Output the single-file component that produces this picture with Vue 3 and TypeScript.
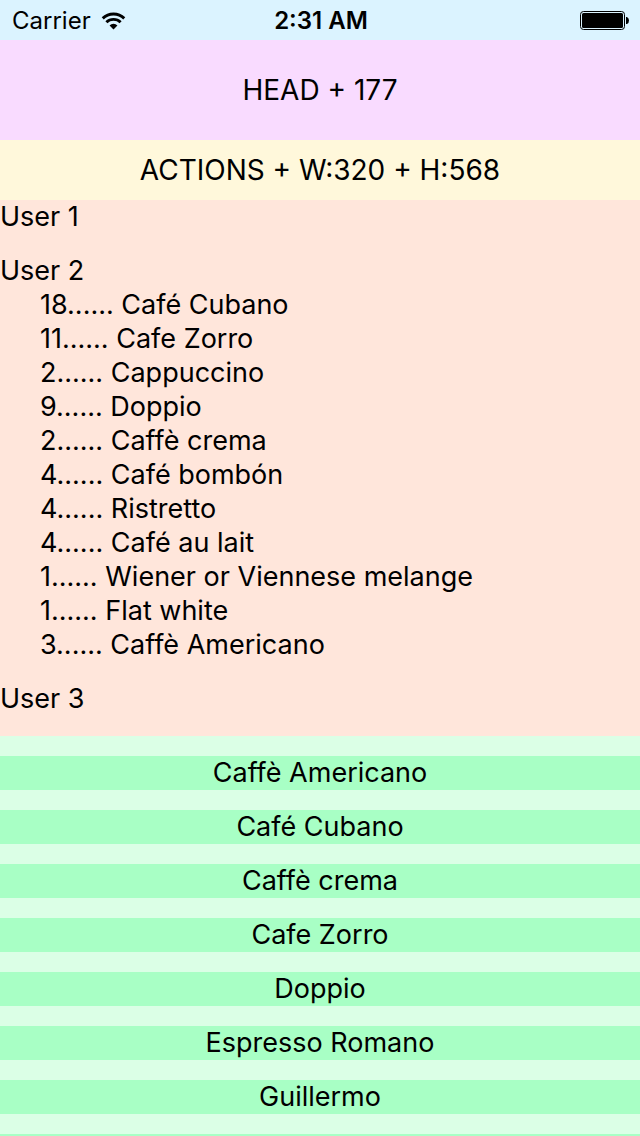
<script setup lang="ts">
import { ref } from 'vue'

interface Order {
  count: number
  drink: string
}

interface User {
  id: number
  name: string
  orders: Order[]
}

const total = ref(177)
const selectedUser = ref(2)

const users = ref<User[]>([
  { id: 1, name: 'User 1', orders: [] },
  {
    id: 2,
    name: 'User 2',
    orders: [
      { count: 18, drink: 'Café Cubano' },
      { count: 11, drink: 'Cafe Zorro' },
      { count: 2, drink: 'Cappuccino' },
      { count: 9, drink: 'Doppio' },
      { count: 2, drink: 'Caffè crema' },
      { count: 4, drink: 'Café bombón' },
      { count: 4, drink: 'Ristretto' },
      { count: 4, drink: 'Café au lait' },
      { count: 1, drink: 'Wiener or Viennese melange' },
      { count: 1, drink: 'Flat white' },
      { count: 3, drink: 'Caffè Americano' },
    ],
  },
  { id: 3, name: 'User 3', orders: [] },
])

const drinks: string[] = [
  'Caffè Americano',
  'Café Cubano',
  'Caffè crema',
  'Cafe Zorro',
  'Doppio',
  'Espresso Romano',
  'Guillermo',
]

function addDrink(drink: string): void {
  const user = users.value.find((u) => u.id === selectedUser.value)
  if (!user) return
  const order = user.orders.find((o) => o.drink === drink)
  if (order) order.count += 1
  else user.orders.push({ count: 1, drink })
  total.value += 1
}
</script>

<template>
  <div class="screen">
    <div class="status">
      <div class="carrier">
        <span>Carrier</span>
        <svg class="wifi" viewBox="0 0 26 18" aria-hidden="true">
          <path d="M1.8 6.3a16 16 0 0 1 22.4 0" />
          <path d="M5.6 10.3a10.6 10.6 0 0 1 14.8 0" />
          <path class="solid" d="M13 17.8l-4.1-4.2a5.9 5.9 0 0 1 8.2 0z" />
        </svg>
      </div>
      <span class="time">2:31 AM</span>
      <svg class="battery" viewBox="0 0 50 20" aria-hidden="true">
        <rect class="case" x="0.5" y="0.5" width="44" height="18" rx="3" />
        <rect x="2" y="2" width="41" height="15" rx="1.5" />
        <path d="M46 6h1q2 1 2 3.500t-2 3.500h-1z" />
      </svg>
    </div>

    <header class="head">HEAD + {{ total }}</header>
    <div class="actions">ACTIONS + W:320 + H:568</div>

    <main class="users">
      <section v-for="user in users" :key="user.id" class="user">
        <div>{{ user.name }}</div>
        <ul v-if="user.orders.length" class="orders">
          <li v-for="order in user.orders" :key="order.drink">
            {{ order.count }}...... {{ order.drink }}
          </li>
        </ul>
      </section>
    </main>

    <div class="menu">
      <button
        v-for="drink in drinks"
        :key="drink"
        type="button"
        class="drink"
        @click="addDrink(drink)"
      >
        {{ drink }}
      </button>
      <div class="drink" aria-hidden="true"></div>
    </div>
  </div>
</template>

<style>
body {
  margin: 0;
  background: #dbffe6;
}
</style>

<style scoped>
.screen {
  display: flex;
  flex-direction: column;
  height: 100vh;
  overflow: hidden;
  color: #000;
  font-family: Inter, 'Liberation Sans', sans-serif;
  font-size: 27px;
  line-height: 34px;
}

.status {
  display: grid;
  grid-template-columns: 1fr auto 1fr;
  align-items: center;
  flex: none;
  box-sizing: border-box;
  height: 40px;
  padding: 2px 10px 0 12px;
  background: #dbf3ff;
  font-size: 24px;
}

.carrier {
  display: flex;
  align-items: center;
  gap: 10px;
}

.wifi {
  width: 25px;
  height: 18px;
  fill: none;
  stroke: #000;
  stroke-width: 3;
}

.wifi .solid {
  fill: #000;
  stroke: none;
}

.time {
  font-weight: 600;
}

.battery {
  justify-self: end;
  width: 50px;
  height: 20px;
}

.battery .case {
  fill: none;
  stroke: #000;
}

.head,
.actions {
  display: flex;
  flex: none;
  align-items: center;
  justify-content: center;
  font-size: 28px;
}

.head {
  height: 100px;
  background: #f9dbff;
}

.actions {
  height: 60px;
  background: #fff8db;
}

.users {
  display: flex;
  flex: none;
  flex-direction: column;
  gap: 20px;
  padding-bottom: 20px;
  background: #ffe6db;
}

.orders {
  margin: 0;
  padding: 0 0 0 40px;
  list-style: none;
}

.menu {
  display: flex;
  flex: 1;
  flex-direction: column;
  gap: 20px;
  min-height: 0;
  padding-top: 20px;
  overflow: hidden;
  background: #dbffe6;
}

.drink {
  flex: none;
  height: 34px;
  padding: 0;
  border: 0;
  background: #a8ffc5;
  color: inherit;
  font: inherit;
  text-align: center;
  cursor: pointer;
}
</style>
